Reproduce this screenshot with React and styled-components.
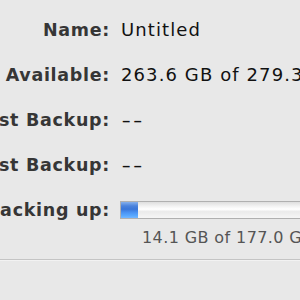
import React from "react";
import styled, { createGlobalStyle, css } from "styled-components";

const Global = createGlobalStyle`
  html, body {
    margin: 0;
    padding: 0;
    width: 300px;
    height: 300px;
    overflow: hidden;
    background: #e8e8e8;
  }
  #root { width: 300px; height: 300px; }
`;

const Panel = styled.div`
  width: 300px;
  height: 300px;
  overflow: hidden;
  background: #e8e8e8;
  font-family: "DejaVu Sans", "Liberation Sans", sans-serif;
  display: flex;
  flex-direction: column;
`;

const InfoGrid = styled.div`
  display: grid;
  grid-template-columns: 110px 1fr;
  column-gap: 10px;
  row-gap: 25px;
  padding-top: 20px;
`;

const Label = styled.div`
  display: flex;
  justify-content: flex-end;
  white-space: nowrap;
  font-weight: bold;
  font-size: 17.5px;
  letter-spacing: 0.7px;
  line-height: 20px;
  color: #363636;
`;

const Value = styled.div`
  white-space: nowrap;
  font-size: 18px;
  letter-spacing: 1.1px;
  line-height: 20px;
  color: #111;
  padding-left: 1px;
  ${(p) =>
    p.$dash &&
    css`
      letter-spacing: 1.5px;
      transform: scaleX(1.45);
      transform-origin: left center;
    `}
`;

const ProgressCell = styled.div`
  display: flex;
  flex-direction: column;
  gap: 10px;
  padding-top: 1px;
`;

const Track = styled.div`
  height: 18px;
  width: 200px;
  box-sizing: border-box;
  border: 1px solid #b0b0b0;
  border-right: none;
  background: linear-gradient(
    to bottom,
    #dedede 0%,
    #f2f2f2 25%,
    #ffffff 45%,
    #ebebeb 60%,
    #f6f6f6 100%
  );
  display: flex;
`;

const Fill = styled.div`
  height: 100%;
  background: linear-gradient(
    to bottom,
    #86b0ec 0%,
    #4a82dc 25%,
    #3a76d8 45%,
    #4a92f2 65%,
    #58a8ff 85%,
    #74b6ff 100%
  );
`;

const Caption = styled.div`
  white-space: nowrap;
  font-size: 16px;
  letter-spacing: 0.4px;
  line-height: 18px;
  color: #555;
  padding-left: 22px;
`;

const Separator = styled.div`
  margin-top: 12px;
  height: 1px;
  background: #c4c4c4;
  border-bottom: 1px solid #f2f2f2;
`;

const rows = [
  { label: "Name:", value: "Untitled" },
  { label: "Available:", value: "263.6 GB of 279.3 GB" },
  { label: "Oldest Backup:", value: "--", dash: true },
  { label: "Latest Backup:", value: "--", dash: true },
];

export default function App() {
  const used = 14.1;
  const total = 177.0;
  return (
    <Panel>
      <Global />
      <InfoGrid>
        {rows.map((r) => (
          <React.Fragment key={r.label}>
            <Label>{r.label}</Label>
            <Value $dash={r.dash}>{r.value}</Value>
          </React.Fragment>
        ))}
        <Label>Backing up:</Label>
        <ProgressCell>
          <Track>
            <Fill style={{ width: `${(used / total) * 200 + 1}px` }} />
          </Track>
          <Caption>14.1 GB of 177.0 GB</Caption>
        </ProgressCell>
      </InfoGrid>
      <Separator />
    </Panel>
  );
}
